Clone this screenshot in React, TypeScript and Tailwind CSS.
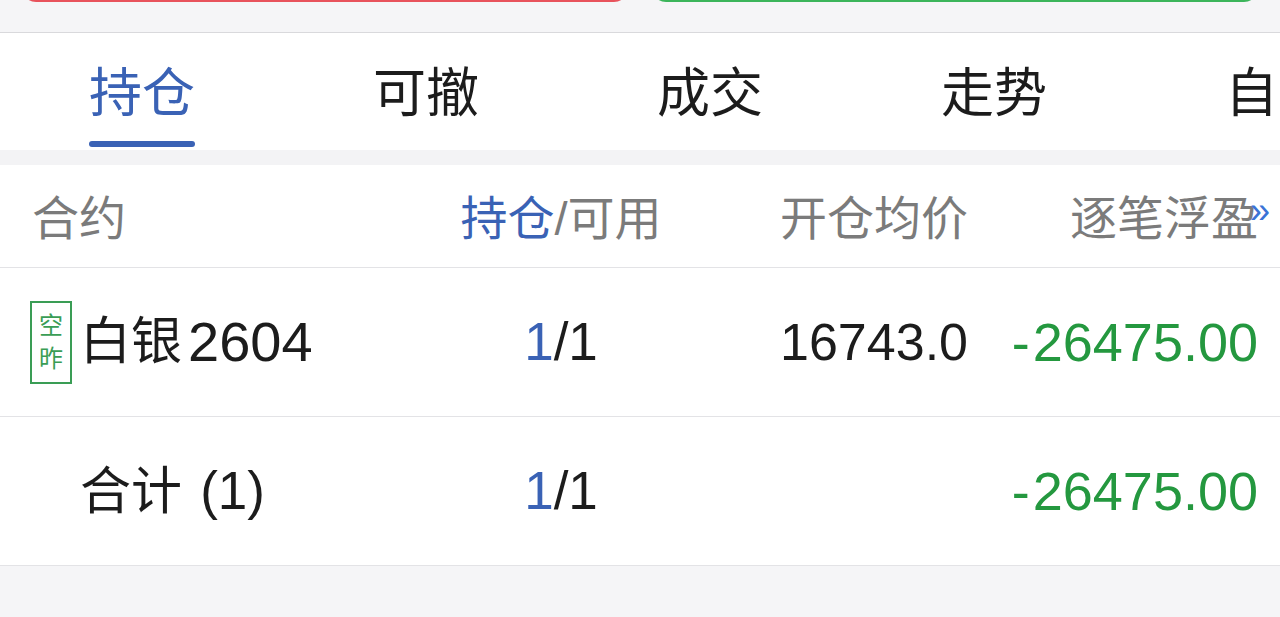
const TABS = ['持仓', '可撤', '成交', '走势', '自选']

const FONT = "font-['Liberation_Sans','Noto_Sans_CJK_SC',sans-serif]"

function OneOfOne() {
  return (
    <span>
      <span className="text-[#3a62b5]">1</span>
      <span className="text-[#1c1c1c]">/1</span>
    </span>
  )
}

function Loss() {
  return (
    <span className="text-[#24983f] text-[54px]">
      <span className="mr-[3px]">-</span>26475.00
    </span>
  )
}

export default function App() {
  return (
    <div className={`w-[1280px] h-[617px] overflow-hidden bg-[#f5f5f7] ${FONT}`}>
      {/* buy / sell buttons, mostly scrolled off */}
      <div className="h-[32px] flex gap-[24px] px-[22px] overflow-hidden">
        <div className="flex-1 h-[48px] -mt-[46px] rounded-[14px] bg-[#e8535c]" />
        <div className="flex-1 h-[48px] -mt-[46px] rounded-[14px] bg-[#3cb55b]" />
      </div>

      {/* tabs */}
      <div className="h-[118px] bg-white border-t border-[#d9d9dc] flex">
        {TABS.map((t, i) => (
          <div
            key={t}
            className="w-[284px] shrink-0 flex flex-col items-center pt-[32px]"
          >
            <div
              className={`text-[53px] leading-[58px] whitespace-nowrap ${
                i === 0 ? 'text-[#3a62b5]' : 'text-[#1c1c1c]'
              }`}
            >
              {t}
            </div>
            {i === 0 && (
              <div className="mt-[18px] w-[106px] h-[6px] rounded-full bg-[#3a62b5]" />
            )}
          </div>
        ))}
      </div>

      <div className="h-[15px] bg-[#f3f3f5]" />

      {/* table */}
      <div className="bg-white text-[#1c1c1c]">
        <div className="h-[103px] grid grid-cols-[408px_242px_286px_290px] items-center pl-[32px] pr-[22px] pt-[6px] border-b border-[#e3e3e6] text-[47px] text-[#7b7b7b]">
          <div>合约</div>
          <div className="text-center">
            <span className="text-[#3a62b5]">持仓</span>/可用
          </div>
          <div className="text-right">开仓均价</div>
          <div className="text-right relative">
            逐笔浮盈
            <span className="absolute -right-[12px] top-[0px] text-[36px] text-[#3a73d6]">»</span>
          </div>
        </div>

        <div className="h-[149px] grid grid-cols-[408px_242px_286px_290px] items-center pl-[32px] pr-[22px] border-b border-[#e3e3e6] text-[53px]">
          <div className="flex items-center -ml-[2px]">
            <div className="w-[42px] h-[83px] border-2 border-[#3a9d55] flex flex-col items-center justify-center text-[24px] leading-[33px] text-[#3a9d55]">
              <span>空</span>
              <span>昨</span>
            </div>
            <span className="ml-[8px] text-[51px]">白银</span>
            <span className="ml-[6px] text-[56px]">2604</span>
          </div>
          <div className="text-center">
            <OneOfOne />
          </div>
          <div className="text-right text-[52px]">16743.0</div>
          <div className="text-right">
            <Loss />
          </div>
        </div>

        <div className="h-[149px] grid grid-cols-[408px_242px_286px_290px] items-center pl-[32px] pr-[22px] border-b border-[#e3e3e6] text-[53px]">
          <div className="pl-[48px] text-[51px]">
            合计 <span className="text-[53px] ml-[4px]">(1)</span>
          </div>
          <div className="text-center">
            <OneOfOne />
          </div>
          <div />
          <div className="text-right">
            <Loss />
          </div>
        </div>
      </div>
    </div>
  )
}
